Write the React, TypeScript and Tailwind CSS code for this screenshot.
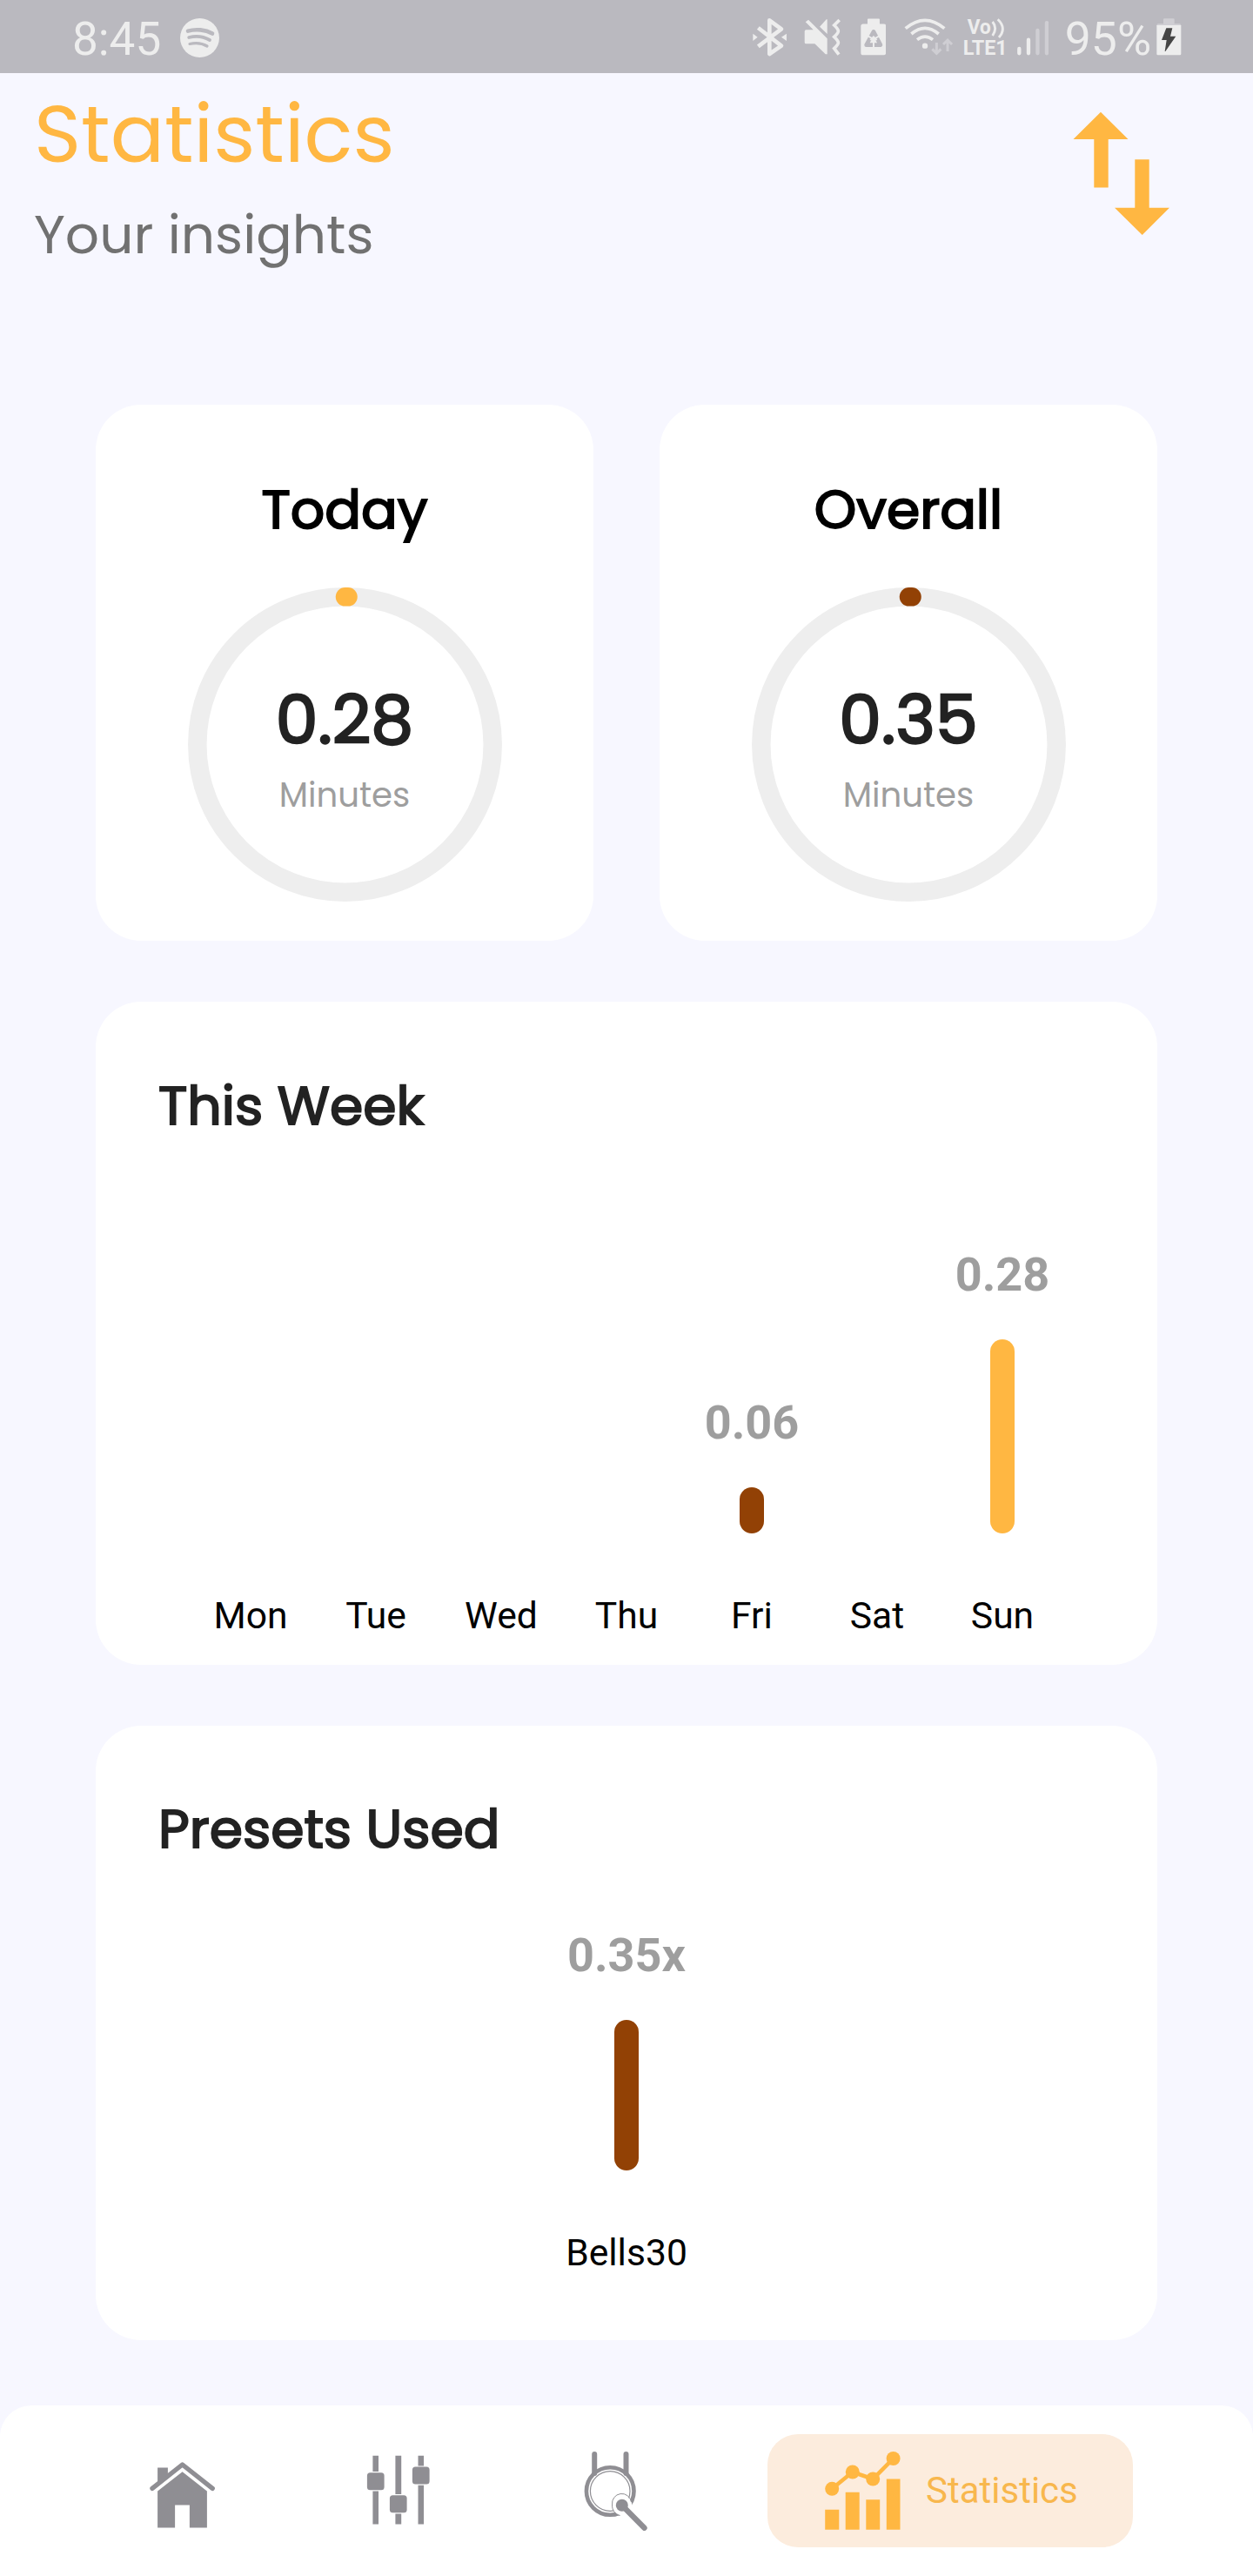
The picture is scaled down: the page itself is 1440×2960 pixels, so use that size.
import React from "react";

const LIGHT = "#ededed";
const DIM = "#cfced3";
const ORANGE = "#ffb742";
const BROWN = "#924105";
const GREY = "#8f8e93";

const poppins = "font-['Poppins','Inter',sans-serif] whitespace-nowrap";

function StatusBar() {
  return (
    <div className="flex h-[84px] shrink-0 items-start bg-[#bab9bf] font-['Roboto',sans-serif] text-[53px] leading-[84px] text-[#ededed]">
      <span className="ml-[83px] w-[102px] translate-y-[3px]">8:45</span>
      <svg className="mt-[21px] ml-[22px] h-[45px] w-[45px]" viewBox="0 0 45 45" fill="none" stroke="#bab9bf" strokeLinecap="round">
        <circle cx="22.5" cy="22.5" r="22.5" fill={LIGHT} stroke="none" />
        <path d="M9 14.6C18 12 29 13 37 17.6" strokeWidth="4.6" />
        <path d="M10.2 22C18 20 27 21 34 25" strokeWidth="3.8" />
        <path d="M11 29.5C18 28 25 28.5 31 32" strokeWidth="3.2" />
      </svg>
      <svg className="mt-[10px] ml-[612.7px] h-[70px] w-[39.3px]" viewBox="14 0 118 210" fill={LIGHT}>
        <path d="M33 66 113 128 72 156V40L113 70 33 130" fill="none" stroke={LIGHT} strokeWidth="14" strokeLinejoin="round" />
        <path d="M15 86 31 98 15 111ZM131 86 113 98 131 111Z" />
      </svg>
      <svg className="mt-[10px] ml-[20.3px] h-[70px] w-[42.4px]" viewBox="193 0 127 210" fill={LIGHT}>
        <path d="M208 38 273 103V157H267L230 121H200Q195 121 195 116V78Q195 73 200 73H225L198 46ZM247 62 270 37H273V87Z" />
        <path d="M315 39 297 57Q311 70 311 77T297 97Q311 110 311 117T297 137L313 158" fill="none" stroke={LIGHT} strokeWidth="11" />
      </svg>
      <svg className="mt-[10px] ml-[22px] h-[70px] w-[29.6px]" viewBox="386 0 89 210" fill={LIGHT}>
        <path d="M410 52V37Q410 34 413 34H449Q452 34 452 37V52H466Q474 52 474 60V152Q474 160 466 160H395Q387 160 387 152V60Q387 52 395 52Z" />
        <path d="M431 79 455 125H406Z" fill="none" stroke="#bab9bf" strokeWidth="14" strokeLinejoin="round" />
        <path d="M431 136V96M420 108 431 97 442 108M413 95 425 102M449 95 437 102" fill="none" stroke={LIGHT} strokeWidth="6" />
      </svg>
      <svg className="mt-[10px] ml-[21px] h-[70px] w-[56.4px]" viewBox="538 0 169 210" fill="none" stroke={LIGHT} strokeWidth="11">
        <path d="M543 68Q610 12 677 68M563 87Q610 47 657 87M583 107Q610 86 637 107" />
        <circle cx="610" cy="128" r="9.5" fill={LIGHT} stroke="none" />
        <path d="M650 117V155M635 139 650 154 665 139M688 147V108M673 123 688 108 703 123" stroke={DIM} strokeWidth="9" />
      </svg>
      <svg className="mt-[10px] ml-[11px] h-[70px] w-[50px]" viewBox="740 0 150 210" fill={LIGHT}>
        <text x="754" y="87" fontSize="69" fontWeight="700" fontFamily="Roboto" textLength="81" lengthAdjust="spacingAndGlyphs">Vo</text>
        <text x="739" y="158" fontSize="70" fontWeight="700" fontFamily="Roboto" textLength="153" lengthAdjust="spacingAndGlyphs">LTE1</text>
        <path d="M841 45Q859 67 841 93M859 37Q891 67 863 99" fill="none" stroke={LIGHT} strokeWidth="8.5" />
      </svg>
      <svg className="mt-[10px] ml-[12px] h-[70px] w-[36.6px]" viewBox="926 0 110 210" fill="none" stroke={LIGHT} strokeWidth="13" strokeLinecap="round">
        <path d="M933 138V154M965 107V154" />
        <path d="M996.5 75V154M1028 48V154" stroke={DIM} />
      </svg>
      <span className="ml-[18.5px] w-[100px] translate-y-[3px] text-[53.5px]">95%</span>
      <svg className="mt-[10px] ml-[5.5px] h-[70px] w-[29px]" viewBox="1409 0 87 210" fill={LIGHT}>
        <path d="M1433 52V37Q1433 34 1436 34H1468Q1471 34 1471 37V52H1490Q1494 52 1494 60H1410Q1410 52 1414 52Z" fill={DIM} />
        <path d="M1410 57H1494V156Q1494 160 1490 160H1414Q1410 160 1410 156Z" />
        <path d="M1443 67H1464L1457 95H1476L1440 147H1438L1444 108H1427Z" fill="#454545" />
      </svg>
    </div>
  );
}

function SortIcon() {
  return (
    <svg className="mt-[44px] mr-[95px] h-[143px] w-[112px]" viewBox="0 0 112 143" fill={ORANGE}>
      <path d="M32 .7 63.5 32H40.7V87.5H24.3V32H.5ZM71.3 55.3H87.7V110.7H111L79.7 142 48 110.700H71.3Z" />
    </svg>
  );
}

function RingCard({ title, value, color }: { title: string; value: string; color: string }) {
  return (
    <section className="flex h-[616px] w-[572px] flex-col items-center rounded-[52px] bg-white pt-[80.5px]">
      <h2 className={`${poppins} text-[61.7px] leading-[80px] text-black [-webkit-text-stroke:2px_#000]`}>{title}</h2>
      <div className="mt-[49.5px] grid h-[361px] w-[361px]">
        <svg className="col-start-1 row-start-1 h-[361px] w-[361px]" viewBox="0 0 361 361" fill="none" strokeWidth="21.5">
          <circle cx="180.5" cy="180.5" r="169.7" stroke="#eeeeee" />
          <path d="M180.5 10.8H184" stroke={color} strokeLinecap="round" />
        </svg>
        <div className="col-start-1 row-start-1 flex flex-col items-center pt-[107px]">
          <span className={`${poppins} text-[77.5px] leading-[90px] text-[#222222] [-webkit-text-stroke:2.4px_#222222]`}>{value}</span>
          <span className={`${poppins} mt-[17.5px] text-[38.7px] leading-[48px] text-[#9e9e9e]`}>Minutes</span>
        </div>
      </div>
    </section>
  );
}

type Bar = { label: string; value?: string; height: number; color: string };

function BarChart({ bars, areaCls }: { bars: Bar[]; areaCls: string }) {
  return (
    <div className="flex justify-center font-['Roboto',sans-serif]">
      {bars.map((b) => (
        <div key={b.label} className="flex w-[144px] flex-col items-center">
          <div className={`flex flex-col items-center justify-end ${areaCls}`}>
            {b.value && (
              <>
                <span className="text-[54px] leading-[60px] font-bold text-[#9e9e9e]">{b.value}</span>
                <div className="mt-[44px] w-[28px] rounded-full" style={{ height: b.height, backgroundColor: b.color }} />
              </>
            )}
          </div>
          <span className="mt-[69px] text-[42.6px] leading-[50px] text-black">{b.label}</span>
        </div>
      ))}
    </div>
  );
}

const week: Bar[] = [
  { label: "Mon", height: 0, color: BROWN },
  { label: "Tue", height: 0, color: BROWN },
  { label: "Wed", height: 0, color: BROWN },
  { label: "Thu", height: 0, color: BROWN },
  { label: "Fri", value: "0.06", height: 53, color: BROWN },
  { label: "Sat", height: 0, color: BROWN },
  { label: "Sun", value: "0.28", height: 223, color: ORANGE },
];

const presets: Bar[] = [{ label: "Bells30", value: "0.35x", height: 173, color: BROWN }];

function ChartCard({ title, bars, cardCls, areaCls }: { title: string; bars: Bar[]; cardCls: string; areaCls: string }) {
  return (
    <section className={`rounded-[52px] bg-white ${cardCls}`}>
      <h2 className={`${poppins} pl-[72px] text-[61.7px] leading-[80px] text-[#222222] [-webkit-text-stroke:2px_#222222]`}>{title}</h2>
      <BarChart bars={bars} areaCls={areaCls} />
    </section>
  );
}

function BottomNav() {
  return (
    <nav className="mt-auto flex h-[196px] items-start rounded-t-[36px] bg-white pt-[33px] pl-[164px]">
      <div className="flex h-[130px] items-center">
        <svg className="h-[91px] w-[91px]" viewBox="0 0 91 91" fill={GREY}>
          <path d="M11 42.3 45.6 15 80.2 42.3" fill="none" stroke={GREY} strokeWidth="5.4" strokeLinecap="round" strokeLinejoin="round" />
          <path d="M17.1 18.5H28.9V25.8L17.1 35.5ZM17.1 45.5 45.6 23.2 73.9 45.5V87.5H53.9V61.5H37.1V87.5H17.1Z" />
        </svg>
        <svg className="ml-[156.5px] h-[91px] w-[91px]" viewBox="0 0 91 91" fill={GREY}>
          <path d="M16.4 4.8H23V83.5H16.4ZM42.4 4.8H49.2V83.5H42.4ZM68.5 4.8H75V83.5H68.5Z" />
          <g stroke="#fff" strokeWidth="2.4" paintOrder="stroke">
            <rect x="9.9" y="24.2" width="19.7" height="20" rx="3.5" />
            <rect x="35.9" y="50.3" width="19.7" height="20" rx="3.5" />
            <rect x="61.9" y="17.6" width="19.7" height="20" rx="3.5" />
          </g>
        </svg>
        <svg className="ml-[159px] h-[91px] w-[91px]" viewBox="0 0 91 91" fill="none" stroke={GREY}>
          <path d="M21.2 3V25M57.5 3V25" strokeWidth="6" strokeLinecap="round" />
          <circle cx="39.2" cy="45.5" r="27.3" strokeWidth="4.6" />
          <circle cx="39.2" cy="45.5" r="22.8" strokeWidth="1.2" />
          <circle cx="52.8" cy="61.8" r="11.5" fill="#fff" stroke="none" />
          <path d="M50.5 73.5C45 72 41 67 41.6 61A11 11 0 0 1 63.5 58" strokeWidth="1" />
          <path d="M51 75 66 61 70 66 58 78Z" fill="#fff" stroke="none" />
          <path d="M53 62 78.5 87.8" strokeWidth="6.4" strokeLinecap="round" />
          <circle cx="52.8" cy="61.8" r="7" fill={GREY} stroke="none" />
        </svg>
      </div>
      <div className="ml-[129.5px] flex h-[130px] w-[420px] items-center rounded-[35px] bg-[#fcecdd] pl-[63.5px]">
        <svg className="h-[91px] w-[91px]" viewBox="0 0 91 91" fill={ORANGE}>
          <path d="M2.2 66.8H18.3V89.8H2.2ZM25.7 46.8H41.7V89.8H25.7ZM49.3 55.2H65.2V89.8H49.3ZM72.8 31.5H88.5V89.8H72.8Z" />
          <path d="M10.2 42.8 33.8 23.5 57.2 31.5 80.8 7.8" fill="none" stroke={ORANGE} strokeWidth="4.6" />
          <circle cx="10.2" cy="42.8" r="8" />
          <circle cx="33.8" cy="23.5" r="8" />
          <circle cx="57.2" cy="31.5" r="8" />
          <circle cx="80.6" cy="8" r="8" />
        </svg>
        <span className="ml-[27.5px] font-['Roboto',sans-serif] text-[42px] leading-[50px] text-[#f8b74d]">Statistics</span>
      </div>
    </nav>
  );
}

export default function App() {
  return (
    <main className="flex h-[2960px] w-[1440px] flex-col overflow-hidden bg-[#f7f7ff]">
      <StatusBar />
      <header className="flex h-[381px] shrink-0 justify-between">
        <div className="pt-[20px] pl-[39px]">
          <h1 className={`${poppins} text-[92.2px] leading-[100px] text-[#ffb742]`}>Statistics</h1>
          <p className={`${poppins} mt-[30px] text-[61.4px] leading-[72px] text-[#717171]`}>Your insights</p>
        </div>
        <SortIcon />
      </header>
      <div className="flex flex-col gap-[70px] px-[110px]">
        <div className="flex justify-between">
          <RingCard title="Today" value="0.28" color={ORANGE} />
          <RingCard title="Overall" value="0.35" color={BROWN} />
        </div>
        <ChartCard title="This Week" bars={week} cardCls="h-[762px] pt-[80px]" areaCls="h-[450.5px]" />
        <ChartCard title="Presets Used" bars={presets} cardCls="h-[706px] pt-[79px]" areaCls="h-[352px]" />
      </div>
      <BottomNav />
    </main>
  );
}
